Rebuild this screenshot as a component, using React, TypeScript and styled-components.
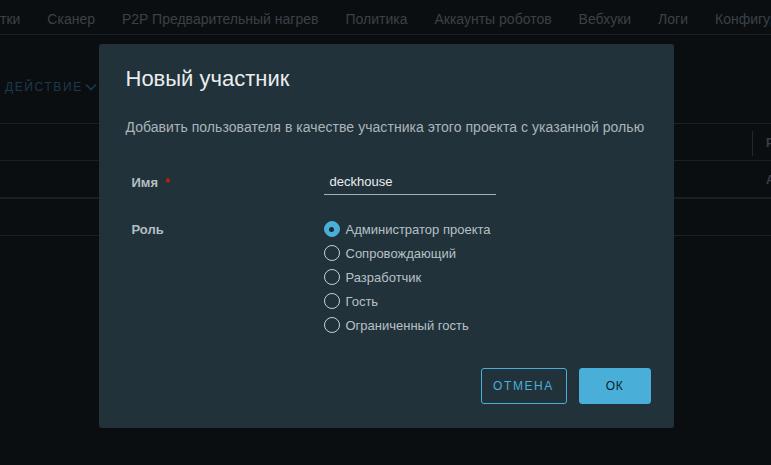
import React from "react";
import styled, { createGlobalStyle } from "styled-components";

const Global = createGlobalStyle`
  html, body { margin: 0; padding: 0; background: #0a0e11; }
  body { font-family: "Liberation Sans", Arial, sans-serif; width: 771px; height: 465px; overflow: hidden; }
  * { box-sizing: border-box; }
`;

const Page = styled.div`
  width: 771px;
  height: 465px;
  background: #0a0e11;
  position: relative;
  overflow: hidden;
`;

const Nav = styled.div`
  height: 35px;
  border-bottom: 1px solid #1b2024;
  display: flex;
  align-items: center;
  gap: 27px;
  padding-top: 3px;
  white-space: nowrap;
  overflow: hidden;
`;

const Tab = styled.span`
  font-size: 14px;
  color: #3c4146;
`;

const ActionBar = styled.div`
  height: 88px;
  display: flex;
  align-items: center;
  padding: 16px 0 0 5px;
`;

const Action = styled.span`
  font-size: 12px;
  letter-spacing: 1.6px;
  color: #1d3a4b;
  display: flex;
  align-items: center;
  gap: 2px;
`;

const Row = styled.div<{ $h: number; $thick?: boolean }>`
  height: ${(p) => p.$h}px;
  border-top: ${(p) => (p.$thick ? 2 : 1)}px solid #1b2024;
  display: flex;
  justify-content: flex-end;
  align-items: center;
  padding-top: 2px;
`;

const Cell = styled.span<{ $sep?: boolean }>`
  font-size: 12px;
  font-weight: bold;
  color: #3a3f44;
  width: 19px;
  padding-left: 13px;
  overflow: hidden;
  border-left: ${(p) => (p.$sep ? "1px solid #22282c" : "1px solid transparent")};
  height: 25px;
  line-height: 25px;
`;

const Backdrop = styled.div`
  position: absolute;
  inset: 0;
  display: flex;
  justify-content: center;
  align-items: flex-start;
  padding-top: 44px;
  padding-left: 1px;
`;

const Modal = styled.div`
  width: 575px;
  height: 384px;
  background: #22323a;
  border-radius: 3px;
  padding: 20px 23px 24px 27px;
  display: flex;
  flex-direction: column;
`;

const Title = styled.h3`
  margin: 0;
  font-size: 22px;
  font-weight: normal;
  line-height: 30px;
  color: #e9edef;
`;

const Desc = styled.p`
  margin: 23px 0 0;
  font-size: 14px;
  letter-spacing: 0.05px;
  line-height: 20px;
  color: #aab5bb;
`;

const Form = styled.div`
  margin-top: 33px;
  display: grid;
  grid-template-columns: 198px 1fr;
  row-gap: 21px;
  padding-left: 6px;
`;

const Label = styled.span`
  font-size: 13px;
  font-weight: bold;
  color: #b4bfc5;
  line-height: 25px;
`;

const Req = styled.span`
  color: #c92100;
  margin-left: 7px;
  font-size: 12px;
`;

const Input = styled.div`
  width: 172px;
  height: 25px;
  margin-left: -6px;
  border-bottom: 1px solid #a6b1b7;
  padding-left: 6px;
  font-size: 13px;
  line-height: 24px;
  color: #e9edef;
`;

const Radios = styled.div`
  display: flex;
  flex-direction: column;
  margin-left: -6px;
`;

const RadioRow = styled.div`
  display: flex;
  align-items: center;
  height: 24px;
  gap: 6px;
`;

const Circle = styled.span<{ $on?: boolean }>`
  width: 16px;
  height: 16px;
  border-radius: 50%;
  border: 1px solid ${(p) => (p.$on ? "#49afd9" : "#c4ced3")};
  background: ${(p) => (p.$on ? "#49afd9" : "transparent")};
  display: flex;
  align-items: center;
  justify-content: center;
  &::after {
    content: "";
    width: 5px;
    height: 5px;
    border-radius: 50%;
    background: ${(p) => (p.$on ? "#1b2a32" : "transparent")};
  }
`;

const RadioText = styled.span`
  font-size: 13px;
  color: #b6c1c7;
`;

const Footer = styled.div`
  margin-top: auto;
  display: flex;
  justify-content: flex-end;
  gap: 12px;
`;

const Button = styled.button<{ $primary?: boolean }>`
  height: 36px;
  border-radius: 3px;
  border: 1px solid #49afd9;
  background: ${(p) => (p.$primary ? "#49afd9" : "transparent")};
  color: ${(p) => (p.$primary ? "#0e1d24" : "#49afd9")};
  font-family: "Liberation Sans", Arial, sans-serif;
  font-size: 12px;
  letter-spacing: ${(p) => (p.$primary ? "0.5px" : "1.6px")};
  text-transform: uppercase;
  padding: 0;
  width: ${(p) => (p.$primary ? 72 : 86)}px;
`;

const tabs = ["тки", "Сканер", "P2P Предварительный нагрев", "Политика", "Аккаунты роботов", "Вебхуки", "Логи", "Конфигурация"];
const roles = ["Администратор проекта", "Сопровождающий", "Разработчик", "Гость", "Ограниченный гость"];

export default function App() {
  return (
    <Page>
      <Global />
      <Nav>
        {tabs.map((t) => (
          <Tab key={t}>{t}</Tab>
        ))}
      </Nav>
      <ActionBar>
        <Action>
          ДЕЙСТВИЕ
          <svg width="12" height="8" viewBox="0 0 12 8">
            <path d="M1 1.5 L6 6.5 L11 1.5" fill="none" stroke="#1d3a4b" strokeWidth="1.6" />
          </svg>
        </Action>
      </ActionBar>
      <Row $h={37}>
        <Cell $sep>Р</Cell>
      </Row>
      <Row $h={37}>
        <Cell>А</Cell>
      </Row>
      <Row $h={38} $thick />
      <Row $h={40} />
      <Backdrop>
        <Modal>
          <Title>Новый участник</Title>
          <Desc>Добавить пользователя в качестве участника этого проекта с указанной ролью</Desc>
          <Form>
            <Label>
              Имя<Req>*</Req>
            </Label>
            <Input>deckhouse</Input>
            <Label>Роль</Label>
            <Radios>
              {roles.map((r, i) => (
                <RadioRow key={r}>
                  <Circle $on={i === 0} />
                  <RadioText>{r}</RadioText>
                </RadioRow>
              ))}
            </Radios>
          </Form>
          <Footer>
            <Button>Отмена</Button>
            <Button $primary>ОК</Button>
          </Footer>
        </Modal>
      </Backdrop>
    </Page>
  );
}
